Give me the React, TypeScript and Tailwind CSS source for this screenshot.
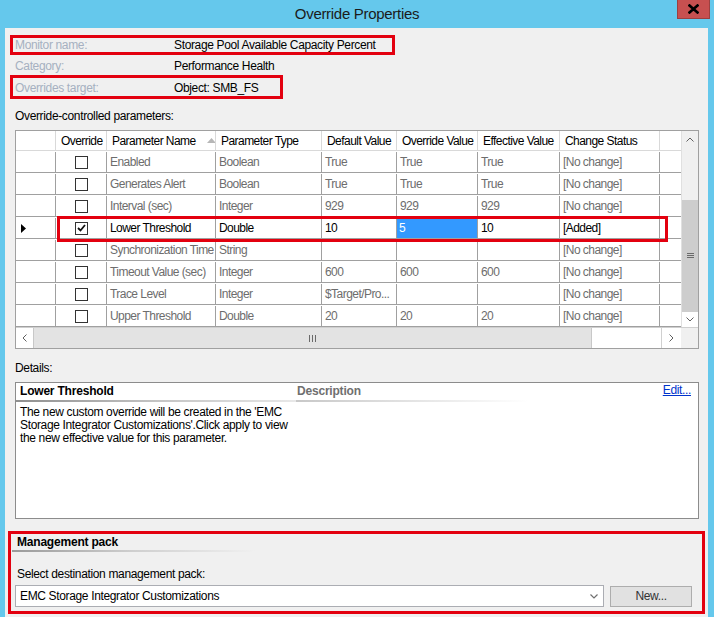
import React from 'react';

type Row = {
  name: string;
  type: string;
  def: string;
  ov: string;
  eff: string;
  status: string;
  selected?: boolean;
};

const rows: Row[] = [
  { name: 'Enabled', type: 'Boolean', def: 'True', ov: 'True', eff: 'True', status: '[No change]' },
  { name: 'Generates Alert', type: 'Boolean', def: 'True', ov: 'True', eff: 'True', status: '[No change]' },
  { name: 'Interval (sec)', type: 'Integer', def: '929', ov: '929', eff: '929', status: '[No change]' },
  { name: 'Lower Threshold', type: 'Double', def: '10', ov: '5', eff: '10', status: '[Added]', selected: true },
  { name: 'Synchronization Time', type: 'String', def: '', ov: '', eff: '', status: '[No change]' },
  { name: 'Timeout Value (sec)', type: 'Integer', def: '600', ov: '600', eff: '600', status: '[No change]' },
  { name: 'Trace Level', type: 'Integer', def: '$Target/Pro...', ov: '', eff: '', status: '[No change]' },
  { name: 'Upper Threshold', type: 'Double', def: '20', ov: '20', eff: '20', status: '[No change]' },
];

export default function App() {
  return (
    <div className="flex h-[617px] w-[714px] flex-col overflow-hidden bg-[#65c8ec] font-['Liberation_Sans',Arial,sans-serif] text-[12px] tracking-[-0.35px] text-black">
      <TitleBar />
      <div className="ml-[5px] mr-[6px] flex flex-1 flex-col bg-[#f0f0f0]">
        <InfoRow label="Monitor name:" value="Storage Pool Available Capacity Percent" boxed width="w-[385px]" height="h-[20px]" className="mt-[7px]" />
        <InfoRow label="Category:" value="Performance Health" width="w-[385px]" height="h-[20px]" className="pt-[2px]" />
        <InfoRow label="Overrides target:" value="Object: SMB_FS" boxed width="w-[273px]" height="h-[24px]" className="pt-[1px]" />

        <div className="mt-[10px] pl-[10px] leading-[14px]">Override-controlled parameters:</div>
        <ParamGrid />

        <div className="mt-[12px] pl-[10px] leading-[14px]">Details:</div>
        <DetailsPanel />

        <ManagementPack />
      </div>
    </div>
  );
}

function TitleBar() {
  return (
    <div className="relative flex h-[28px] items-center justify-center">
      <span className="text-[15px] tracking-[-0.3px] text-[#1b1b1b]">Override Properties</span>
      <div className="absolute right-[4px] top-0 flex h-[19px] w-[33px] items-center justify-center border border-t-0 border-[#9b4040] bg-[#c75050]">
        <svg width="11" height="10" viewBox="0 0 11 10" aria-hidden>
          <path d="M1.5 1.5 L9.5 8.5 M9.5 1.5 L1.5 8.5" stroke="#000" strokeWidth="2.6" strokeLinecap="square" />
        </svg>
      </div>
    </div>
  );
}

type InfoRowProps = {
  label: string;
  value: string;
  boxed?: boolean;
  width: string;
  height: string;
  className?: string;
};

function InfoRow({ label, value, boxed, width, height, className = '' }: InfoRowProps) {
  return (
    <div
      className={`ml-[5px] flex items-center border-[3px] ${boxed ? 'border-[#e3000f]' : 'border-transparent'} ${width} ${height} ${className}`}
    >
      <span className="w-[161px] pl-[2px] text-[#a6b0c1]">{label}</span>
      <span>{value}</span>
    </div>
  );
}

const cols = ['w-[51px]', 'w-[109px]', 'w-[106px]', 'w-[75px]', 'w-[81px]', 'w-[82px]', 'w-[100px]'];

function Checkbox({ checked }: { checked?: boolean }) {
  return (
    <span className="flex h-[13px] w-[13px] items-center justify-center border border-[#333] bg-white">
      {checked && (
        <svg width="9" height="8" viewBox="0 0 9 8" aria-hidden>
          <path d="M1 4 L3.5 6.5 L8 1" stroke="#111" strokeWidth="1.8" fill="none" />
        </svg>
      )}
    </span>
  );
}

function ParamGrid() {
  const headers = ['Override', 'Parameter Name', 'Parameter Type', 'Default Value', 'Override Value', 'Effective Value', 'Change Status'];
  return (
    <div className="ml-[10px] mt-[7px] flex w-[684px] flex-col border border-[#a0a0a0] bg-white tracking-[-0.55px]">
      <div className="flex">
        <div className="relative flex w-[665px] flex-col">
          <div className="flex h-[20px] border-b border-[#d9d9d9]">
            <div className="w-[40px] border-r border-[#d9d9d9]" />
            {headers.map((h, i) => (
              <div key={h} className={`${cols[i]} flex items-center overflow-hidden whitespace-nowrap border-r border-[#d9d9d9] pl-[5px]`}>
                <span>{h}</span>
                {i === 1 && (
                  <svg className="ml-[11px] shrink-0" width="9" height="5" viewBox="0 0 9 5" aria-hidden>
                    <path d="M0 5 L4.5 0 L9 5 Z" fill="#b7b7b7" />
                  </svg>
                )}
              </div>
            ))}
            <div className="flex-1" />
          </div>
          {rows.map((r) => (
            <div key={r.name} className={`flex h-[22px] border-b border-[#a0a0a0] pt-[1px] ${r.selected ? 'text-black' : 'text-[#6d6d6d]'}`}>
              <div className="flex w-[40px] items-center border-r border-[#a0a0a0] pl-[5px]">
                {r.selected && (
                  <svg width="5" height="9" viewBox="0 0 5 9" aria-hidden>
                    <path d="M0 0 L5 4.5 L0 9 Z" fill="#000" />
                  </svg>
                )}
              </div>
              <div className={`${cols[0]} flex items-center justify-center border-r border-[#a0a0a0]`}>
                <Checkbox checked={r.selected} />
              </div>
              <Cell w={cols[1]}>{r.name}</Cell>
              <Cell w={cols[2]}>{r.type}</Cell>
              <Cell w={cols[3]}>{r.def}</Cell>
              <Cell w={cols[4]} highlight={r.selected}>{r.ov}</Cell>
              <Cell w={cols[5]}>{r.eff}</Cell>
              <Cell w={cols[6]}>{r.status}</Cell>
              <div className="flex-1" />
            </div>
          ))}
          {/* annotation round the edited row */}
          <div className="pointer-events-none absolute left-[41px] top-[85px] h-[26px] w-[611px] border-[3px] border-[#e3000f]" />
        </div>
        <VScroll />
      </div>
      <div className="flex h-[21px] border-t border-[#cfcfcf]">
        <HScroll />
        <div className="w-[17px] bg-[#f0f0f0]" />
      </div>
    </div>
  );
}

function Cell({ w, children, highlight }: { w: string; children: React.ReactNode; highlight?: boolean }) {
  return (
    <div
      className={`${w} flex items-center overflow-hidden whitespace-nowrap border-r border-[#a0a0a0] ${highlight ? '-mt-[1px] bg-[#3399ff] pl-[2px] pt-[1px] text-white' : 'pl-[3px]'}`}
    >
      {children}
    </div>
  );
}

function VScroll() {
  return (
    <div className="flex h-[196px] w-[17px] flex-col border-l border-[#e0e0e0] bg-[#f0f0f0]">
      <div className="flex h-[17px] items-center justify-center">
        <svg width="8" height="5" viewBox="0 0 8 5" aria-hidden>
          <path d="M0.5 4.5 L4 1 L7.5 4.5" stroke="#606060" strokeWidth="1" fill="none" />
        </svg>
      </div>
      <div className="h-[52px]" />
      <div className="flex h-[112px] items-center justify-center bg-[#cdcdcd]">
        <svg width="7" height="6" viewBox="0 0 7 6" aria-hidden>
          <path d="M0 0.5 H7 M0 2.5 H7 M0 4.5 H7" stroke="#6a6a6a" strokeWidth="1" />
        </svg>
      </div>
      <div className="flex flex-1 items-center justify-center bg-white">
        <svg width="8" height="5" viewBox="0 0 8 5" aria-hidden>
          <path d="M0.5 0.5 L4 4 L7.5 0.5" stroke="#606060" strokeWidth="1" fill="none" />
        </svg>
      </div>
    </div>
  );
}

function HScroll() {
  return (
    <div className="flex w-[665px] bg-[#f0f0f0]">
      <div className="flex w-[17px] items-center justify-center bg-white">
        <svg width="5" height="8" viewBox="0 0 5 8" aria-hidden>
          <path d="M4.5 0.5 L1 4 L4.5 7.5" stroke="#606060" strokeWidth="1" fill="none" />
        </svg>
      </div>
      <div className="flex w-[559px] items-center justify-center border-x border-[#c8c8c8] bg-[#e3e3e3]">
        <svg width="7" height="7" viewBox="0 0 7 7" aria-hidden>
          <path d="M0.5 0 V7 M3.5 0 V7 M6.5 0 V7" stroke="#6a6a6a" strokeWidth="1" />
        </svg>
      </div>
      <div className="flex-1 bg-white" />
      <div className="flex w-[20px] items-center justify-center border-l border-[#d0d0d0] bg-white">
        <svg width="5" height="8" viewBox="0 0 5 8" aria-hidden>
          <path d="M0.5 0.5 L4 4 L0.5 7.5" stroke="#606060" strokeWidth="1" fill="none" />
        </svg>
      </div>
    </div>
  );
}

function DetailsPanel() {
  return (
    <div className="ml-[10px] mt-[7px] flex h-[137px] w-[684px] flex-col border border-[#8c8c8c] bg-white">
      <div className="flex h-[19px] items-start">
        <div className="flex w-[280px] flex-col">
          <span className="pl-[4px] pt-[1px] font-bold leading-[15px] tracking-[-0.2px]">Lower Threshold</span>
          <div className="mt-[1px] h-[2px] bg-linear-to-r from-[#8f8f8f] via-[#c4c4c4] to-[#e8e8e8]" />
        </div>
        <div className="flex w-[232px] flex-col">
          <span className="pl-[1px] pt-[1px] font-bold leading-[15px] tracking-[-0.2px] text-[#6f6f6f]">Description</span>
          <div className="mt-[1px] h-[2px] bg-linear-to-r from-[#c8c8c8] to-transparent" />
        </div>
        <a className="ml-auto mr-[7px] pt-[1px] leading-[13px] text-[#0033cc] underline">Edit...</a>
      </div>
      <p className="mt-[4px] pl-[4px] leading-[13px]">
        The new custom override will be created in the 'EMC
        <br />
        Storage Integrator Customizations'.Click apply to view
        <br />
        the new effective value for this parameter.
      </p>
    </div>
  );
}

function ManagementPack() {
  return (
    <div className="ml-[3px] mt-[12px] flex h-[83px] w-[697px] flex-col border-[3px] border-[#e3000f]">
      <span className="pl-[6px] pt-[1px] font-bold leading-[14px] tracking-[-0.2px]">Management pack</span>
      <div className="ml-[1px] mt-[1px] h-[2px] w-[243px] bg-linear-to-r from-[#9a9a9a] via-[#cfcfcf] to-transparent" />
      <span className="mt-[15px] pl-[6px] leading-[14px]">Select destination management pack:</span>
      <div className="mt-[4px] flex items-center">
        <div className="ml-[4px] flex h-[22px] w-[589px] items-center border border-[#abadb3] bg-white pl-[4px] pr-[5px]">
          <span className="flex-1">EMC Storage Integrator Customizations</span>
          <svg width="8" height="5" viewBox="0 0 8 5" aria-hidden>
            <path d="M0.5 0.5 L4 4 L7.5 0.5" stroke="#707070" strokeWidth="1.2" fill="none" />
          </svg>
        </div>
        <button type="button" className="ml-[6px] h-[21px] w-[82px] border border-[#adadad] bg-[#e1e1e1] text-[12px] tracking-[-0.35px] text-[#333]">
          New...
        </button>
      </div>
    </div>
  );
}
